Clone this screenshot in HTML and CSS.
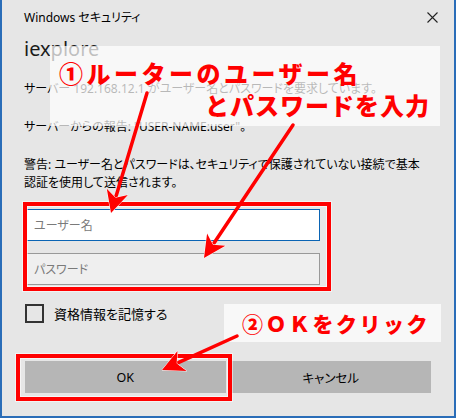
FILE: index.html
```html
<!DOCTYPE html>
<html lang="ja">
<head>
<meta charset="utf-8">
<title>Windows セキュリティ</title>
<link rel="stylesheet" href="styles.css">
</head>
<body>
<div class="dialog">
  <div class="titlebar">
    <span class="title">Windows セキュリティ</span>
    <svg class="close" width="11" height="11" viewBox="0 0 11 11"><path d="M0.5 0.5 L10.5 10.5 M10.5 0.5 L0.5 10.5" stroke="#222" stroke-width="1.1" fill="none"/></svg>
  </div>
  <div class="content">
    <div class="app">iexplore</div>
    <p class="msg m1">サーバー 192.168.12.1 がユーザー名とパスワードを要求しています。</p>
    <p class="msg m2">サーバーからの報告: "USER-NAME:user"。</p>
    <p class="msg m3">警告: ユーザー名とパスワードは、セキュリティで保護されていない接続で基本<br>認証を使用して送信されます。</p>
    <div class="field field-user">ユーザー名</div>
    <div class="field field-pass">パスワード</div>
    <div class="remember"><span class="checkbox"></span><span class="remember-label">資格情報を記憶する</span></div>
    <div class="buttons">
      <div class="btn">OK</div>
      <div class="btn">キャンセル</div>
    </div>
  </div>

  <div class="note note-1">
    <span class="note-line line-a">①ルーターのユーザー名</span>
    <span class="note-line line-b">とパスワードを入力</span>
  </div>
  <div class="note note-2">
    <span class="note-line line-c">②ＯＫをクリック</span>
  </div>
  <div class="redbox redbox-fields"></div>
  <div class="redbox redbox-ok"></div>
  <svg class="arrows" width="456" height="418" viewBox="0 0 456 418">
    <g stroke="#ff0000" stroke-width="3.5" stroke-linecap="round" fill="none">
      <line x1="147" y1="93" x2="115.6" y2="197.7"/>
      <line x1="293" y1="125" x2="212.9" y2="244.7"/>
      <line x1="237" y1="336" x2="176.6" y2="363.4"/>
    </g>
    <g fill="#ff0000" stroke="#ffffff" stroke-width="1" stroke-linejoin="miter" paint-order="stroke">
      <polygon points="111,213 127.9,195.1 115.6,197.7 106.8,188.8"/>
      <polygon points="204,258 225.4,245.8 212.9,244.7 207.1,233.6"/>
      <polygon points="162,370 186.6,370.9 176.6,363.4 177.5,350.9"/>
    </g>
  </svg>
</div>
</body>
</html>
```

FILE: styles.css
```css
* { box-sizing: border-box; }
html, body { margin: 0; padding: 0; }
body {
  width: 456px;
  height: 418px;
  overflow: hidden;
  background: #e6e6e6;
  font-family: "Noto Sans", "Noto Sans CJK JP", sans-serif;
  font-feature-settings: "palt";
  color: #000;
}
.dialog {
  position: relative;
  width: 456px;
  height: 418px;
  background: #e6e6e6;
  border: 2px solid #2a6db8;
  border-top: 0;
}
.titlebar {
  height: 35px;
  display: flex;
  align-items: center;
  justify-content: space-between;
  padding: 0 16px 0 22px;
}
.title {
  font-size: 12px;
  line-height: 16px;
}
.close { display: block; }
.content {
  padding: 0 23px 0 22px;
}
.app {
  font-size: 20px;
  line-height: 28px;
  height: 28px;
  color: #1a1a1a;
}
.msg {
  margin: 0;
  font-size: 12px;
  line-height: 18px;
  white-space: nowrap;
}
.m1 { margin-top: 17px; }
.m2 { margin-top: 20px; }
.m3 { margin-top: 20px; }
.field {
  width: 294px;
  height: 32px;
  margin-left: 2px;
  padding-left: 7px;
  display: flex;
  align-items: center;
  font-size: 12px;
  color: #7a7a7a;
}
.field-user {
  margin-top: 17px;
  background: #ffffff;
  border: 1px solid #0a64b4;
}
.field-pass {
  margin-top: 12px;
  background: #efefef;
  border: 1px solid #999999;
}
.remember {
  margin-top: 19px;
  margin-left: 1px;
  height: 19px;
  display: flex;
  align-items: center;
  gap: 10px;
}
.checkbox {
  width: 19px;
  height: 19px;
  border: 2px solid #333333;
  flex: none;
}
.remember-label {
  font-size: 13px;
  line-height: 18px;
}
.buttons {
  margin-top: 38px;
  margin-left: 1px;
  display: grid;
  grid-template-columns: 1fr 1fr;
  gap: 5px;
}
.btn {
  height: 32px;
  background: #b6b6b6;
  display: flex;
  align-items: center;
  justify-content: center;
  font-size: 12.5px;
}

/* annotations */
.note {
  position: absolute;
  background: rgba(255, 255, 255, 0.72);
}
.note-1 { left: 48px; top: 46px; width: 390px; height: 80px; }
.note-2 { left: 222px; top: 304px; width: 217px; height: 38px; }
.note-line {
  position: absolute;
  white-space: nowrap;
  color: #ff0000;
  font-family: "Noto Sans CJK JP", sans-serif;
  font-weight: 900;
  font-feature-settings: normal;
}
.line-a { left: 9px; top: 12px; font-size: 24px; line-height: 30px; letter-spacing: 3.5px; }
.line-b { left: 155px; top: 44px; font-size: 24px; line-height: 30px; letter-spacing: 1px; }
.line-c { left: 18px; top: 5px; font-size: 21px; line-height: 28px; letter-spacing: 2.5px; }
.redbox {
  position: absolute;
  border: 4px solid #ff0000;
  box-shadow: 0 0 0 1px rgba(255, 255, 255, 0.5), inset 0 0 0 1px rgba(255, 255, 255, 0.6);
}
.redbox-fields { left: 21px; top: 202px; width: 308px; height: 89px; }
.redbox-ok { left: 14px; top: 354px; width: 216px; height: 47px; }
.arrows {
  position: absolute;
  left: -2px;
  top: 0;
  pointer-events: none;
}
```
